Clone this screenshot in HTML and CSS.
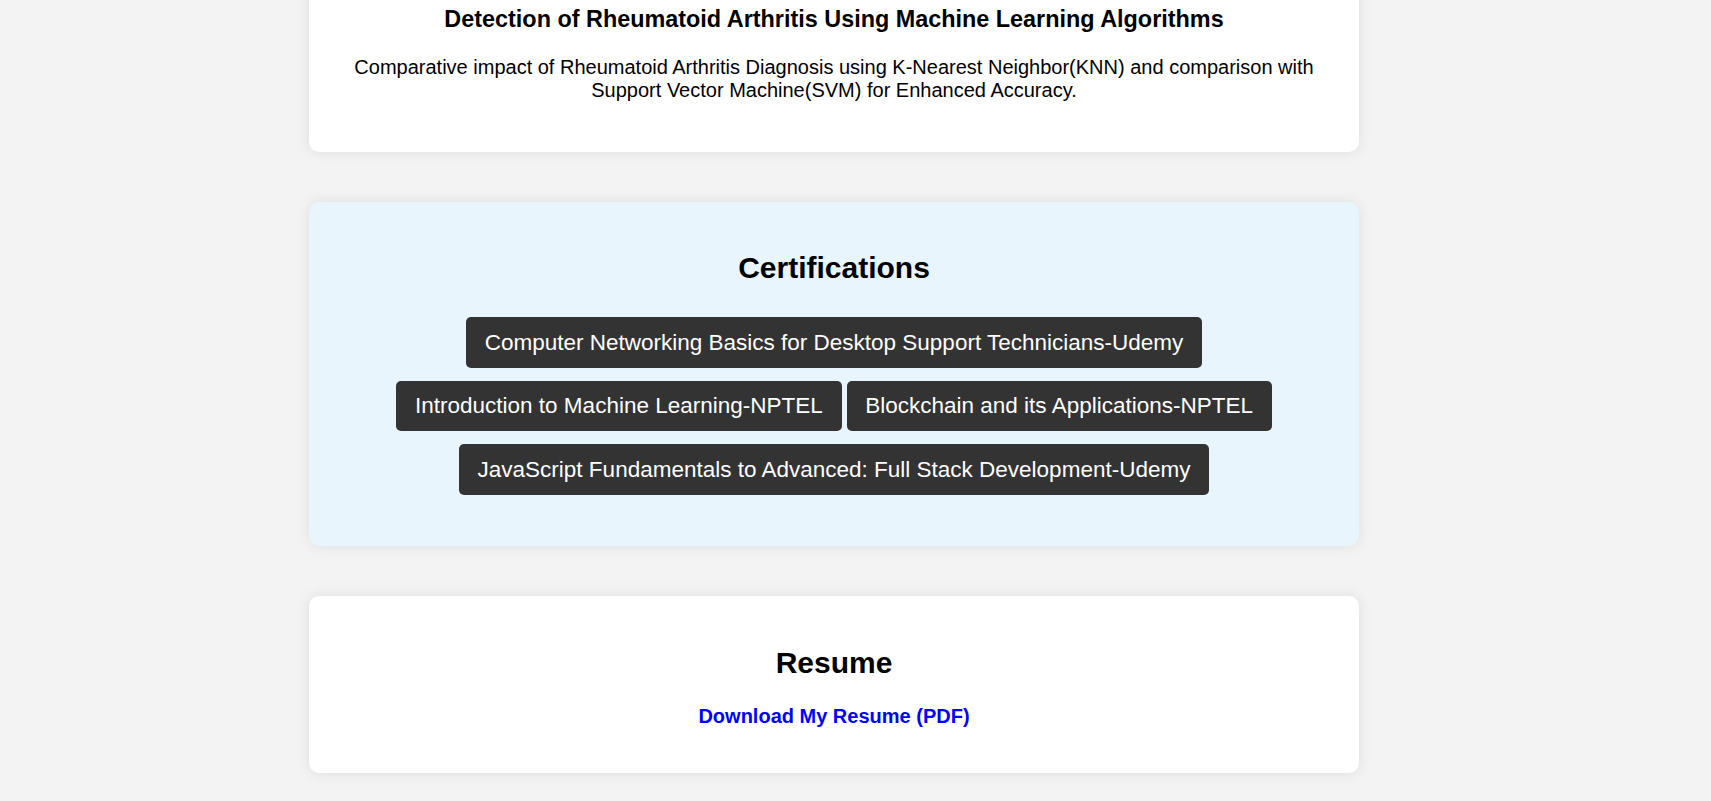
FILE: index.html
```html
<!DOCTYPE html>
<html lang="en">
<head>
<meta charset="utf-8">
<title>Portfolio</title>
<link rel="stylesheet" href="styles.css">
</head>
<body>
<main class="page">
  <section class="card card-project">
    <h3 class="project-title">Detection of Rheumatoid Arthritis Using Machine Learning Algorithms</h3>
    <p class="project-desc">Comparative impact of Rheumatoid Arthritis Diagnosis using K-Nearest Neighbor(KNN) and comparison with Support Vector Machine(SVM) for Enhanced Accuracy.</p>
  </section>

  <section class="card card-certs">
    <h2 class="section-title certs-title">Certifications</h2>
    <div class="cert-list">
      <span class="cert">Computer Networking Basics for Desktop Support Technicians-Udemy</span>
      <span class="cert">Introduction to Machine Learning-NPTEL</span>
      <span class="cert">Blockchain and its Applications-NPTEL</span>
      <span class="cert">JavaScript Fundamentals to Advanced: Full Stack Development-Udemy</span>
    </div>
  </section>

  <section class="card card-resume">
    <h2 class="section-title resume-title">Resume</h2>
    <p class="resume-link-row"><a class="resume-link" href="#">Download My Resume (PDF)</a></p>
  </section>
</main>
</body>
</html>
```
FILE: styles.css
```css
* {
  box-sizing: border-box;
}

body {
  margin: 0;
  background: #f3f3f3;
  font-family: "Liberation Sans", Arial, sans-serif;
  color: #000;
}

.page {
  width: 1050px;
  margin-left: 309px;
  display: flex;
  flex-direction: column;
  gap: 50px;
  padding-bottom: 20px;
}

.card {
  background: #fff;
  border-radius: 10px;
  box-shadow: 0 0 14px rgba(0, 0, 0, 0.09);
  text-align: center;
}

.card-project {
  margin-top: -19px;
  padding: 25px 25px 50px;
}

.project-title {
  margin: 0 0 23px;
  font-size: 23.4px;
  line-height: 27px;
  font-weight: bold;
}

.project-desc {
  margin: 0;
  font-size: 20px;
  line-height: 23px;
}

.card-certs {
  background: #e8f5fc;
  padding: 49px 25px 51px;
}

.section-title {
  margin: 0;
  font-size: 30px;
  line-height: 34px;
  font-weight: bold;
}

.certs-title {
  margin-bottom: 32px;
}

.cert-list {
  display: flex;
  flex-wrap: wrap;
  justify-content: center;
  row-gap: 13px;
  column-gap: 5px;
}

.cert {
  background: #333;
  color: #fff;
  font-size: 22.5px;
  line-height: 25.5px;
  padding: 12.5px 18.75px;
  border-radius: 5px;
}

.card-resume {
  padding: 50px 25px 45px;
}

.resume-title {
  margin-bottom: 25px;
}

.resume-link-row {
  margin: 0;
  font-size: 20px;
  line-height: 23px;
}

.resume-link {
  color: #0000ff;
  font-weight: bold;
  text-decoration: none;
}
```
